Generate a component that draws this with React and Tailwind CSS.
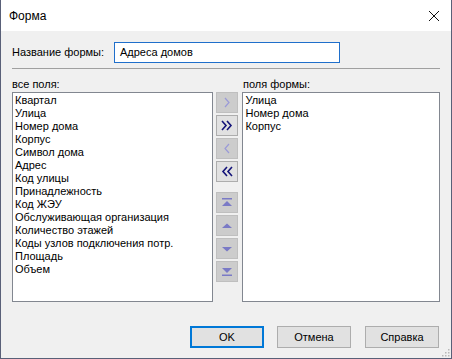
import React from 'react'

const allFields = [
  'Квартал',
  'Улица',
  'Номер дома',
  'Корпус',
  'Символ дома',
  'Адрес',
  'Код улицы',
  'Принадлежность',
  'Код ЖЭУ',
  'Обслуживающая организация',
  'Количество этажей',
  'Коды узлов подключения потр.',
  'Площадь',
  'Объем',
]

const formFields = ['Улица', 'Номер дома', 'Корпус']

function Chevron({ dir = 'right', double = false, active = false }) {
  const color = active ? '#14147a' : '#9a9ad8'
  const w = active ? 1.6 : 1.2
  const one = (x) =>
    dir === 'right'
      ? `${x},5 ${x + 4},9.5 ${x},14`
      : `${x + 4},5 ${x},9.5 ${x + 4},14`
  return (
    <svg width="20" height="19" viewBox="0 0 20 19">
      {double ? (
        <>
          <polyline points={one(dir === 'right' ? 5 : 6)} fill="none" stroke={color} strokeWidth={w} />
          <polyline points={one(dir === 'right' ? 10 : 11)} fill="none" stroke={color} strokeWidth={w} />
        </>
      ) : (
        <polyline points={one(8)} fill="none" stroke={color} strokeWidth={w} />
      )}
    </svg>
  )
}

function Move({ kind }) {
  const c = '#7a7ac6'
  return (
    <svg width="20" height="19" viewBox="0 0 20 19">
      {kind === 'top' && (
        <>
          <rect x="5" y="5" width="10" height="1.5" fill={c} />
          <polygon points="5,13 10,8 15,13" fill={c} />
        </>
      )}
      {kind === 'up' && <polygon points="5,12 10,7.5 15,12" fill={c} />}
      {kind === 'down' && <polygon points="5,8 10,12.5 15,8" fill={c} />}
      {kind === 'bottom' && (
        <>
          <polygon points="5,6 10,11 15,6" fill={c} />
          <rect x="5" y="12.5" width="10" height="1.5" fill={c} />
        </>
      )}
    </svg>
  )
}

function SideButton({ active, children }) {
  return (
    <div
      className={`w-[22px] h-[21px] flex items-center justify-center border ${
        active ? 'bg-[#e1e1e1] border-[#adadad]' : 'bg-[#cccccc] border-[#bfbfbf]'
      }`}
    >
      {children}
    </div>
  )
}

function ListBox({ items, width }) {
  return (
    <div className={`${width} h-[210px] bg-white border border-[#828790] pl-[2px] pt-[1px] overflow-hidden`}>
      {items.map((it) => (
        <div key={it} className="h-[13px] leading-[13px] whitespace-nowrap">
          {it}
        </div>
      ))}
    </div>
  )
}

export default function App() {
  return (
    <div
      className="w-[452px] h-[359px] flex flex-col border-l border-r border-b border-[#596078] text-[11px] text-black"
      style={{ fontFamily: '"Liberation Sans", Arial, sans-serif' }}
    >
      {/* title bar */}
      <div className="h-[31px] bg-white flex items-center justify-between pl-[8px] pr-[8px]">
        <span className="text-[12px]">Форма</span>
        <svg width="12" height="12" viewBox="0 0 12 12" className="mr-[3px]">
          <path d="M1 1 L11 11 M11 1 L1 11" stroke="#111" strokeWidth="1" />
        </svg>
      </div>

      <div className="flex-1 bg-[#f0f0f0] px-[11px] flex flex-col relative">
        {/* name */}
        <div className="flex items-center mt-[11px] h-[21px]">
          <span className="w-[102px] whitespace-nowrap">Название формы:</span>
          <div className="w-[226px] h-[21px] bg-white border border-[#1f6fcb] flex items-center pl-[5px]">
            Адреса домов
          </div>
        </div>

        <div className="mt-[5px] h-px w-[428px] bg-[#a0a0a0]" />

        {/* labels */}
        <div className="flex mt-[7px] h-[16px] leading-[16px]">
          <span className="w-[231px]">все поля:</span>
          <span>поля формы:</span>
        </div>

        {/* lists */}
        <div className="flex">
          <ListBox items={allFields} width="w-[201px]" />
          <div className="w-[30px] flex flex-col items-center">
            <div className="flex flex-col gap-[2px]">
              <SideButton><Chevron dir="right" /></SideButton>
              <SideButton active><Chevron dir="right" double active /></SideButton>
              <SideButton><Chevron dir="left" /></SideButton>
              <SideButton active><Chevron dir="left" double active /></SideButton>
            </div>
            <div className="flex flex-col gap-[2px] mt-[10px]">
              <SideButton><Move kind="top" /></SideButton>
              <SideButton><Move kind="up" /></SideButton>
              <SideButton><Move kind="down" /></SideButton>
              <SideButton><Move kind="bottom" /></SideButton>
            </div>
          </div>
          <ListBox items={formFields} width="w-[198px]" />
        </div>

        {/* bottom buttons */}
        <div className="flex justify-end mt-[24px] gap-[10px] pr-[1px]">
          <div className="w-[74px] h-[22px] bg-[#e1e1e1] border-2 border-[#0078d7] flex items-center justify-center">
            OK
          </div>
          <div className="w-[74px] h-[22px] bg-[#e1e1e1] border border-[#adadad] flex items-center justify-center ml-[3px]">
            Отмена
          </div>
          <div className="w-[74px] h-[22px] bg-[#e1e1e1] border border-[#adadad] flex items-center justify-center ml-[4px]">
            Справка
          </div>
        </div>

        {/* resize grip */}
        <svg width="9" height="9" viewBox="0 0 9 9" className="absolute right-[1px] bottom-[1px]">
          {[[7, 1], [7, 4], [4, 4], [7, 7], [4, 7], [1, 7]].map(([x, y]) => (
            <rect key={`${x}-${y}`} x={x} y={y} width="1.5" height="1.5" fill="#b8b8b8" />
          ))}
        </svg>
      </div>
    </div>
  )
}
